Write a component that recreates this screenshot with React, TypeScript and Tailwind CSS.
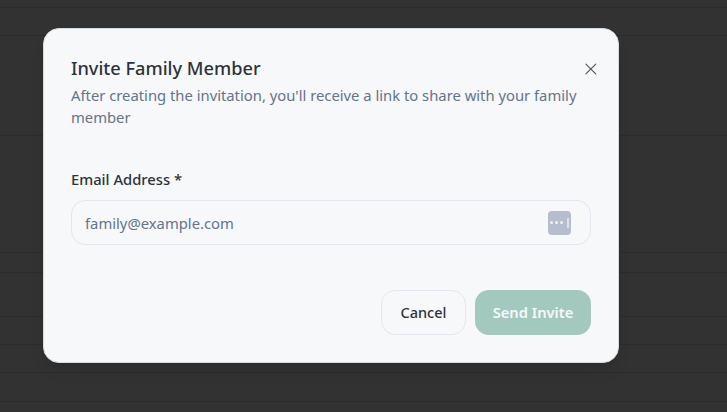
import { X } from "lucide-react";

const rows = [
  { h: "h-[8px]" },
  { h: "h-[28px]" },
  { h: "h-[100px]" },
  { h: "h-[117px]" },
  { h: "h-[20px]" },
  { h: "h-[44px]" },
  { h: "h-[28px]" },
  { h: "h-[28px]" },
  { h: "h-[29px]" },
];

export default function App() {
  return (
    <div className="relative h-[412px] w-[727px] overflow-hidden bg-[#323232] font-['Noto_Sans','Open_Sans',sans-serif]">
      <div className="flex flex-col">
        {rows.map((row, i) => (
          <div key={i} className={`${row.h} border-b border-[#2b2b2b]`} />
        ))}
      </div>

      <div className="absolute left-[43px] top-[28px] flex h-[335px] w-[576px] flex-col rounded-2xl border border-[#d5d9e0] bg-[#f6f8fa] px-[27px] pt-[27px] shadow-lg">
        <div className="flex items-start justify-between">
          <div className="w-[520px]">
            <h2 className="text-[18.2px] leading-[24px] font-medium text-[#2d3339]">Invite Family Member</h2>
            <p className="mt-[4px] text-[14.8px] leading-[22px] text-[#64748b]">
              After creating the invitation, you'll receive a link to share with your family member
            </p>
          </div>
          <X className="mt-[3px] mr-[-10px] size-[20px] text-[#4b5563]" strokeWidth={1.4} />
        </div>

        <label className="mt-[40px] text-[14.75px] leading-[22px] font-medium text-[#2d3339]">Email Address *</label>
        <div className="mt-[10px] flex h-[45px] items-center justify-between rounded-[14px] border border-[#e2e6ee] bg-[#f6f8fa] pr-[19px] pl-[13px]">
          <span className="pt-[2px] text-[14.8px] text-[#64748b]">family@example.com</span>
          <div className="flex h-[24px] w-[23px] items-center gap-[2px] rounded-[4px] bg-[#b6bdcc] pl-[2px]">
            <span className="size-[3px] rounded-full bg-[#eef0f4]" />
            <span className="size-[3px] rounded-full bg-[#eef0f4]" />
            <span className="size-[3px] rounded-full bg-[#eef0f4]" />
            <span className="ml-[2px] h-[10px] w-[2px] bg-[#dfe3ea]" />
          </div>
        </div>

        <div className="mt-[45px] flex justify-end gap-[9px]">
          <button className="h-[45px] w-[85px] rounded-[14px] border border-[#e2e6ee] text-[14.5px] font-medium text-[#2d3339]">Cancel</button>
          <button className="h-[45px] w-[116px] rounded-[14px] bg-[#a3c9bf] text-[14.7px] font-semibold text-[#f6f8fa]">Send Invite</button>
        </div>
      </div>
    </div>
  );
}
